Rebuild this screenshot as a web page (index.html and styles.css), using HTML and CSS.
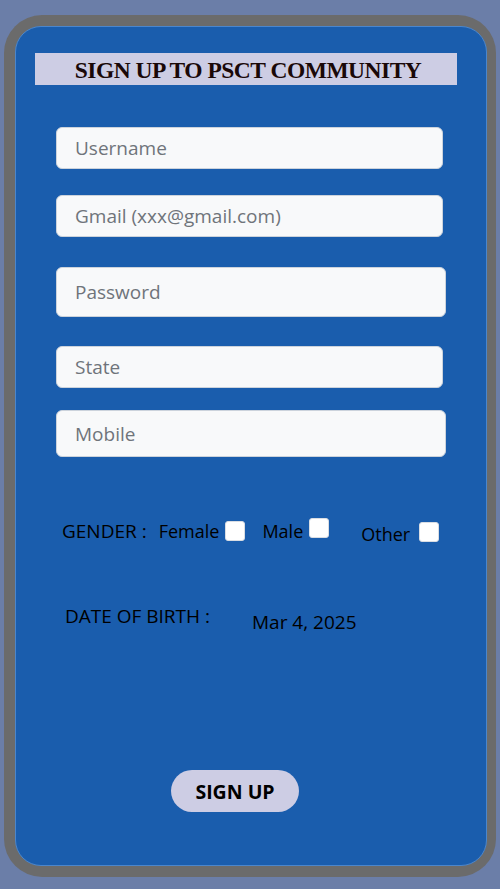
FILE: index.html
```html
<!DOCTYPE html>
<html lang="en">
<head>
<meta charset="utf-8">
<title>Sign up to PSCT Community</title>
<link rel="stylesheet" href="styles.css">
</head>
<body>
<div class="frame">
  <div class="card">
    <h1 class="title">SIGN UP TO PSCT COMMUNITY</h1>
    <div class="fields">
      <input class="field" type="text" placeholder="Username">
      <input class="field field-gmail" type="email" placeholder="Gmail (xxx@gmail.com)">
      <input class="field field-password" type="password" placeholder="Password">
      <input class="field field-state" type="text" placeholder="State">
      <input class="field field-mobile" type="tel" placeholder="Mobile">
    </div>
    <div class="gender">
      <span class="gender-label">GENDER :</span>
      <label class="opt opt-female"><span>Female</span><input class="box" type="checkbox"></label>
      <label class="opt opt-male"><span>Male</span><input class="box" type="checkbox"></label>
      <label class="opt opt-other"><span>Other</span><input class="box" type="checkbox"></label>
    </div>
    <div class="dob">
      <span class="dob-label">DATE OF BIRTH :</span>
      <span class="dob-value">Mar 4, 2025</span>
    </div>
    <button class="signup" type="button">SIGN UP</button>
  </div>
</div>
</body>
</html>
```

FILE: styles.css
```css
html, body {
  margin: 0;
  padding: 0;
}

body {
  background: #6b7ea8;
  font-family: "Open Sans", "Noto Sans", sans-serif;
  color: #000;
}

.frame {
  margin: 15px 4px 12px 4px;
  padding: 11px 9px 11px 11px;
  background: #6b6b6b;
  border-radius: 38px;
}

.card {
  box-sizing: border-box;
  height: 840px;
  background: #1a5dad;
  border: 1px solid #4b86cc;
  border-radius: 26px;
  padding-top: 26px;
  display: flex;
  flex-direction: column;
  align-items: flex-start;
}

.title {
  margin: 0 0 0 19px;
  width: 422px;
  height: 32px;
  background: #cdcde4;
  display: flex;
  align-items: center;
  justify-content: center;
  font-family: "Liberation Serif", "Times New Roman", serif;
  font-weight: 700;
  font-size: 23.5px;
  letter-spacing: -0.5px;
  color: #1a0808;
  padding: 2px 0 0 4px;
  box-sizing: border-box;
}

.fields {
  margin: 42px 0 0 40px;
  display: flex;
  flex-direction: column;
}

.field {
  box-sizing: border-box;
  display: block;
  width: 387px;
  height: 42px;
  margin: 0;
  padding: 0 18px;
  background: #f8f9fa;
  border: 1px solid #ccd3dc;
  border-radius: 6px;
  font-family: "Open Sans", "Noto Sans", sans-serif;
  font-size: 19px;
  color: #333;
  outline: none;
}

.field::placeholder {
  color: #6f747a;
}

.field-gmail {
  margin-top: 26px;
}

.field-password {
  margin-top: 30px;
  width: 390px;
  height: 50px;
}

.field-state {
  margin-top: 29px;
}

.field-mobile {
  margin-top: 22px;
  width: 390px;
  height: 47px;
}

.gender {
  margin: 59px 0 0 46px;
  height: 30px;
  display: flex;
  align-items: center;
  font-size: 19px;
  line-height: 24px;
}

.opt {
  display: inline-flex;
  align-items: center;
  gap: 6px;
  font-size: 18px;
}

.opt-female {
  margin-left: 12px;
}

.opt-male {
  margin-left: 17px;
}

.opt-male .box {
  margin-bottom: 6px;
}

.opt-other {
  margin-left: 32px;
  margin-top: 6px;
  gap: 9px;
}

.opt-other .box {
  margin-bottom: 4px;
}

.box {
  appearance: none;
  -webkit-appearance: none;
  box-sizing: border-box;
  width: 20px;
  height: 20px;
  margin: 0;
  background: #fff;
  border: 1px solid #d9dde3;
  border-radius: 3px;
}

.dob {
  margin: 55px 0 0 49px;
  height: 30px;
  display: flex;
  align-items: center;
  font-size: 19px;
  line-height: 24px;
}

.dob-value {
  margin-left: 42px;
  margin-top: 12px;
}

.signup {
  margin: 139px 0 0 155px;
  width: 128px;
  height: 42px;
  border: none;
  border-radius: 21px;
  background: #cdcde4;
  font-family: "Open Sans", "Noto Sans", sans-serif;
  font-weight: 700;
  font-size: 19.5px;
  color: #000;
  padding: 0;
}
```
